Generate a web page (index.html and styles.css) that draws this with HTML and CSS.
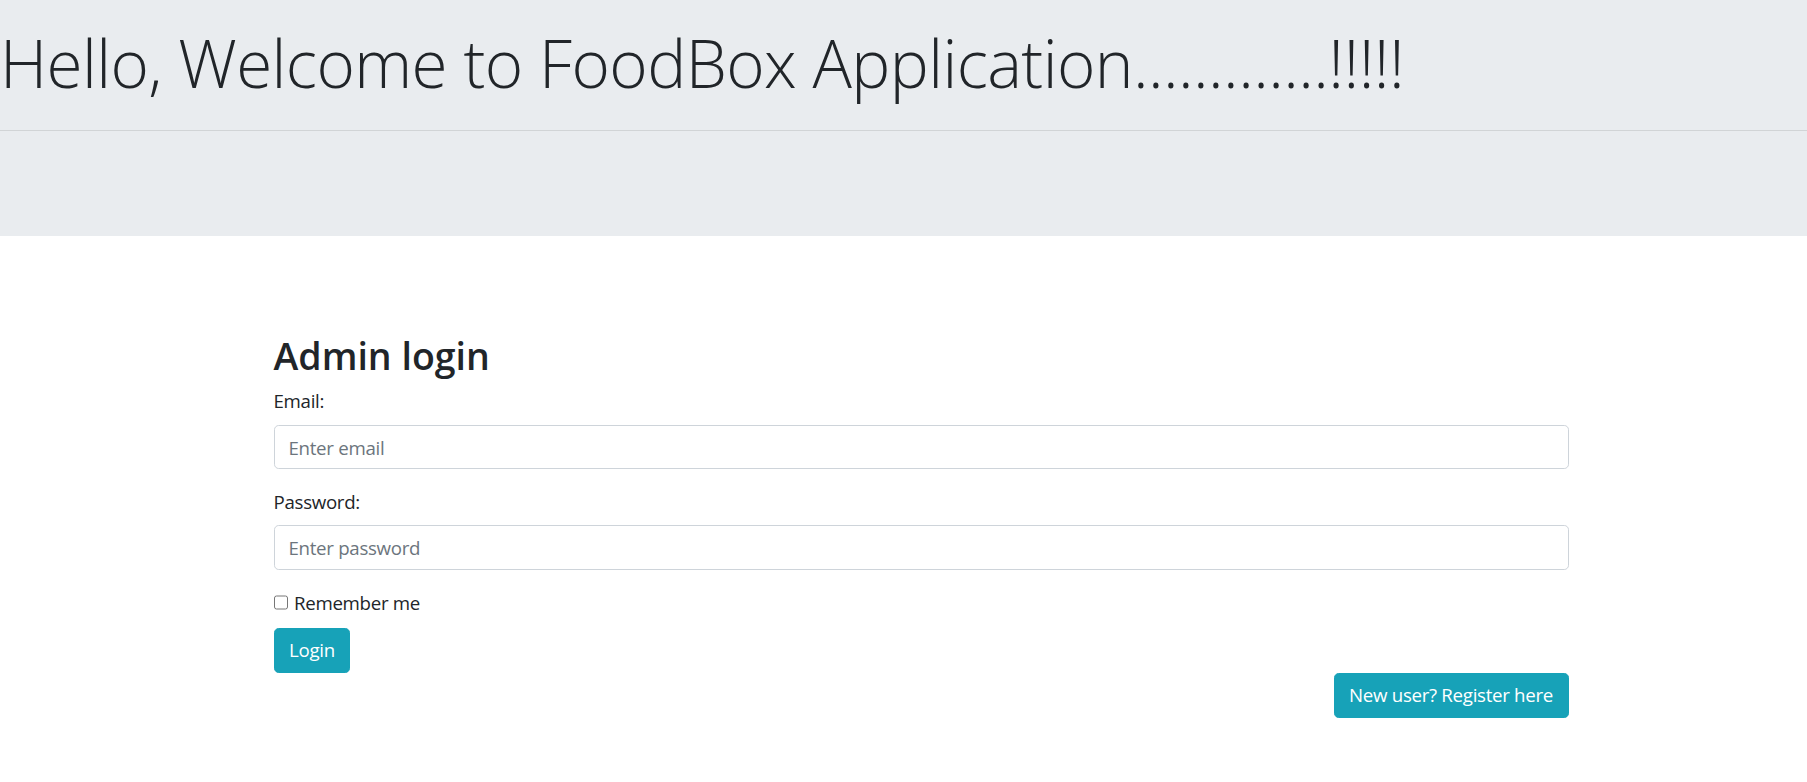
FILE: index.html
```html
<!DOCTYPE html>
<html lang="en">
<head>
<meta charset="utf-8">
<title>FoodBox</title>
<link rel="stylesheet" href="styles.css">
</head>
<body>
<header class="jumbotron">
  <h1 class="display">Hello, Welcome to FoodBox Application.............!!!!!</h1>
  <hr class="divider">
</header>
<main class="container">
  <h2 class="title">Admin login</h2>
  <form class="login-form">
    <div class="form-group">
      <label class="label" for="email">Email:</label>
      <input class="input" type="email" id="email" placeholder="Enter email">
    </div>
    <div class="form-group">
      <label class="label" for="pwd">Password:</label>
      <input class="input" type="password" id="pwd" placeholder="Enter password">
    </div>
    <div class="form-check">
      <label class="check-label"><input class="checkbox" type="checkbox"> Remember me</label>
    </div>
    <button type="submit" class="btn">Login</button>
  </form>
  <div class="register-row">
    <a class="btn" href="#">New user? Register here</a>
  </div>
</main>
</body>
</html>
```

FILE: styles.css
```css
* { box-sizing: border-box; }
html, body { margin: 0; padding: 0; }
body {
  font-family: "Open Sans", "Noto Sans", sans-serif;
  font-size: 18.7px;
  line-height: 1.5;
  letter-spacing: -0.3px;
  color: #212529;
  background: #fff;
}
.jumbotron {
  background: #e9ecef;
  height: 236px;
  padding-top: 24px;
  margin-bottom: 97px;
}
.display {
  margin: 0;
  font-weight: 300;
  font-size: 65.6px;
  line-height: 1.2;
  letter-spacing: -0.6px;
  white-space: nowrap;
}
.divider {
  margin: 27.7px 0 0 0;
  border: 0;
  border-top: 1px solid rgba(0,0,0,0.1);
}
.container {
  width: 1295px;
  margin-left: 273.5px;
}
.title {
  margin: 0 0 9.4px 0;
  font-size: 37.5px;
  font-weight: 600;
  line-height: 1.2;
  letter-spacing: 0;
}
.form-group { margin-bottom: 18.7px; }
.form-group + .form-check { margin-top: 1px; }
.label {
  display: block;
  margin-bottom: 9.4px;
}
.input {
  display: block;
  width: 100%;
  height: 44.5px;
  padding: 7px 14px;
  font-family: inherit;
  font-size: 18.7px;
  line-height: 1.5;
  letter-spacing: -0.3px;
  color: #495057;
  background: #fff;
  border: 1px solid #ced4da;
  border-radius: 4.7px;
}
.input::placeholder { color: #6c757d; }
.form-check { margin-bottom: 11px; }
.check-label { display: inline-flex; align-items: center; gap: 6px; }
.checkbox { width: 14.5px; height: 14.5px; margin: 0; }
.btn {
  display: inline-block;
  height: 45px;
  padding: 7.5px 14.5px;
  font-family: inherit;
  font-size: 18.7px;
  line-height: 28px;
  letter-spacing: -0.3px;
  color: #fff;
  background: #17a2b8;
  border: 1px solid #17a2b8;
  border-radius: 4.7px;
  text-decoration: none;
  cursor: pointer;
}
.register-row {
  display: flex;
  justify-content: flex-end;
}
```
